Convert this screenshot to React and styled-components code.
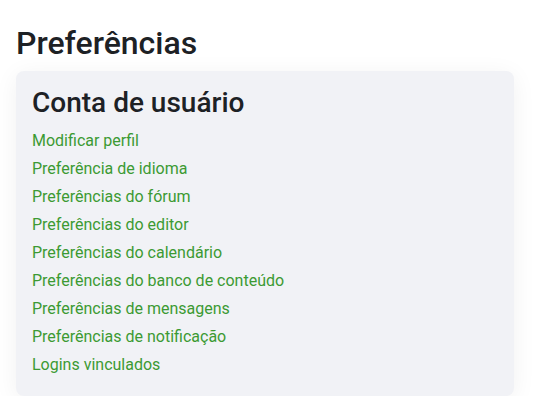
import styled, { createGlobalStyle } from 'styled-components';

const links = [
  'Modificar perfil',
  'Preferência de idioma',
  'Preferências do fórum',
  'Preferências do editor',
  'Preferências do calendário',
  'Preferências do banco de conteúdo',
  'Preferências de mensagens',
  'Preferências de notificação',
  'Logins vinculados',
];

const GlobalStyle = createGlobalStyle`
  body {
    margin: 0;
    background: #fff;
    font-family: Roboto, "Liberation Sans", sans-serif;
    color: #1d2125;
  }
`;

const Page = styled.div`
  padding: 24px 26px 0 16px;
`;

const Title = styled.h2`
  margin: 0 0 9px;
  font-size: 32px;
  font-weight: 500;
  line-height: 38px;
`;

const Card = styled.section`
  width: 498px;
  box-sizing: border-box;
  padding: 15px 16px 17px;
  background: #f1f2f6;
  border-radius: 8px;
  box-shadow: 0 4px 24px rgba(0, 0, 0, 0.06);
`;

const CardTitle = styled.h3`
  margin: 0 0 7px;
  font-size: 28px;
  font-weight: 500;
  line-height: 34px;
`;

const LinkList = styled.ul`
  list-style: none;
  margin: 0;
  padding: 0;
`;

const LinkItem = styled.li`
  height: 28px;
  line-height: 28px;
`;

const Link = styled.a`
  color: #3c9a33;
  font-size: 16px;
  text-decoration: none;
`;

const App = () => (
  <>
    <GlobalStyle />
    <Page>
      <Title>Preferências</Title>
      <Card>
        <CardTitle>Conta de usuário</CardTitle>
        <LinkList>
          {links.map(label => (
            <LinkItem key={label}>
              <Link href='#'>{label}</Link>
            </LinkItem>
          ))}
        </LinkList>
      </Card>
    </Page>
  </>
);

export default App;
